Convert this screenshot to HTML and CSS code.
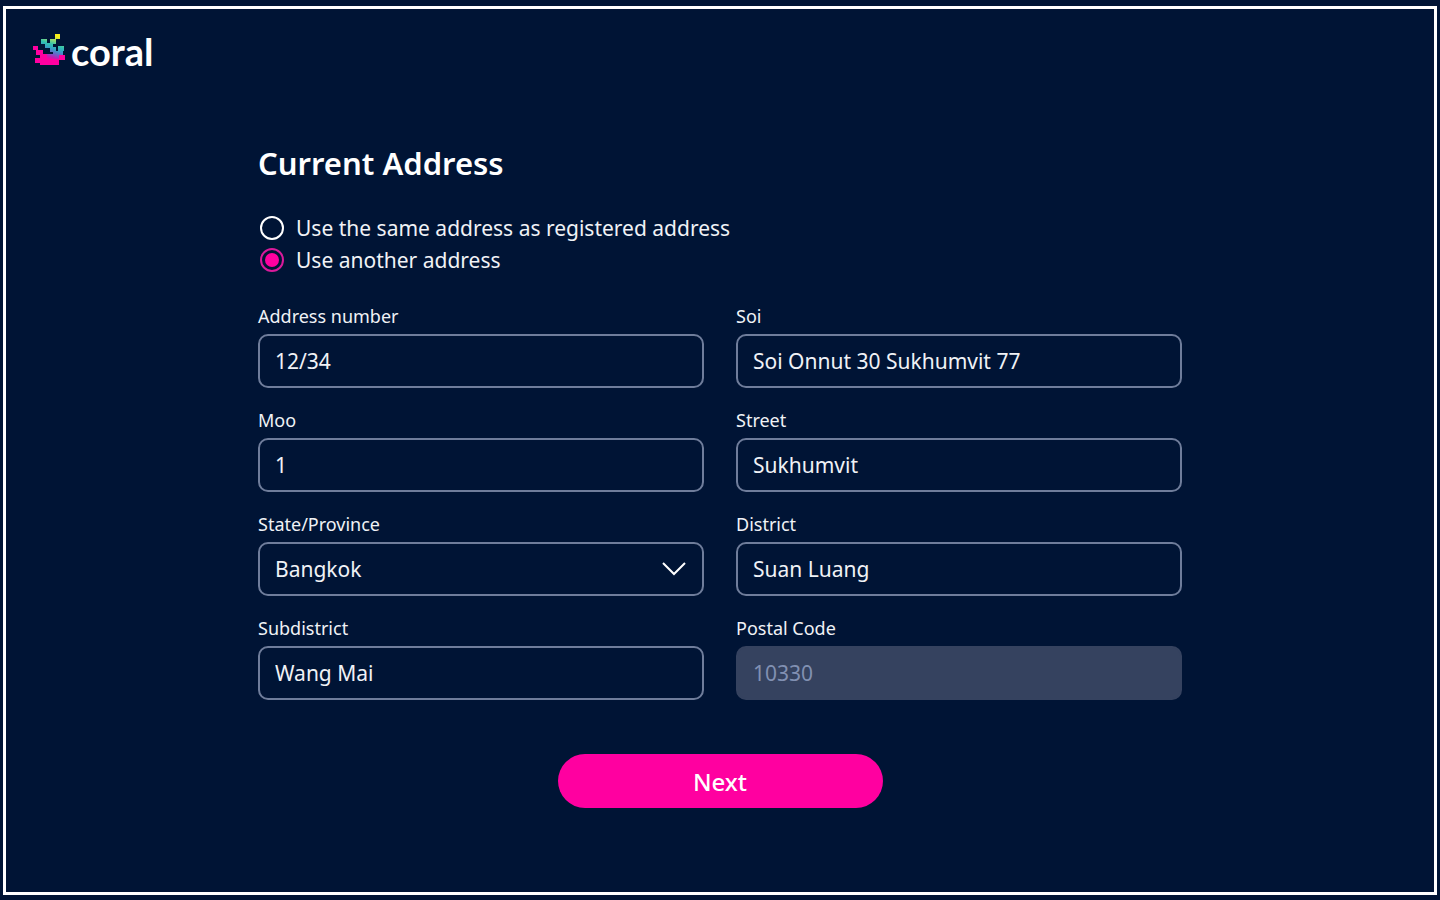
FILE: index.html
```html
<!DOCTYPE html>
<html lang="en">

<head>
    <meta charset="UTF-8">
    <meta name="viewport" content="width=device-width, initial-scale=1.0">
    <title>Coral - Current Address</title>
    <link rel="stylesheet" href="styles.css">
</head>

<body>
    <div class="page">
        <header class="header">
            <a class="logo" href="#">
                <svg class="logo-mark" viewBox="0 0 32 32" aria-hidden="true">
                    <defs>
                        <linearGradient id="coral" gradientUnits="userSpaceOnUse" x1="26" y1="1" x2="18" y2="26">
                            <stop offset="0.08" stop-color="#f8ee18" />
                            <stop offset="0.27" stop-color="#86d77c" />
                            <stop offset="0.42" stop-color="#31c2b0" />
                            <stop offset="0.58" stop-color="#36a0c8" />
                            <stop offset="0.74" stop-color="#6b62c8" />
                            <stop offset="0.88" stop-color="#c020b4" />
                            <stop offset="1" stop-color="#ff00a0" />
                        </linearGradient>
                    </defs>
                    <path fill="url(#coral)" d="M22 0h5v5h-4v5h-3v3h3v4h2v-5h6v5h-1v4h-4v4H13v-5h7v-2h-3v-4h-5v-4H8V5h6v4h3V5h5z" />
                    <path fill="#ff00a0" d="M0 12h5v4h5v4h4v5h12v6H7v-2H2v-5h5v-3H3v-5H0zM26 21h6v5h-6z" />
                </svg>
                <span>coral</span>
            </a>
        </header>

        <main class="content">
            <form class="address-form">
                <h1>Current Address</h1>

                <div class="options">
                    <label class="option">
                        <input type="radio" name="address-type" value="same">
                        Use the same address as registered address
                    </label>
                    <label class="option">
                        <input type="radio" name="address-type" value="another" checked>
                        Use another address
                    </label>
                </div>

                <div class="fields">
                    <div class="field">
                        <label for="number">Address number</label>
                        <input type="text" id="number" value="12/34">
                    </div>
                    <div class="field">
                        <label for="soi">Soi</label>
                        <input type="text" id="soi" value="Soi Onnut 30 Sukhumvit 77">
                    </div>
                    <div class="field">
                        <label for="moo">Moo</label>
                        <input type="text" id="moo" value="1">
                    </div>
                    <div class="field">
                        <label for="street">Street</label>
                        <input type="text" id="street" value="Sukhumvit">
                    </div>
                    <div class="field">
                        <label for="province">State/Province</label>
                        <div class="select">
                            <select id="province">
                                <option>Bangkok</option>
                            </select>
                            <svg class="chevron" viewBox="0 0 24 14" aria-hidden="true">
                                <path d="M1 1l11 11L23 1" />
                            </svg>
                        </div>
                    </div>
                    <div class="field">
                        <label for="district">District</label>
                        <input type="text" id="district" value="Suan Luang">
                    </div>
                    <div class="field">
                        <label for="subdistrict">Subdistrict</label>
                        <input type="text" id="subdistrict" value="Wang Mai">
                    </div>
                    <div class="field">
                        <label for="postal">Postal Code</label>
                        <input type="text" id="postal" value="10330" disabled>
                    </div>
                </div>

                <button class="next" type="submit">Next</button>
            </form>
        </main>
    </div>
</body>

</html>
```
FILE: styles.css
```css
* {
    margin: 0;
    padding: 0;
    box-sizing: border-box;
}

body {
    min-height: 100vh;
    display: flex;
    padding: 6px 3px 5px;
    background: #001435;
    color: #f0f2f6;
    font-family: 'Noto Sans', 'Open Sans', sans-serif;
}

.page {
    flex: 1;
    border: 3px solid #fff;
}

.header {
    padding: 20px 27px;
}

.logo {
    display: flex;
    align-items: center;
    gap: 6px;
    width: fit-content;
    color: #fff;
    font-family: Lato, sans-serif;
    font-size: 38px;
    font-weight: bold;
    line-height: 40px;
    text-decoration: none;
}

.logo span {
    padding-top: 2px;
}

.logo-mark {
    width: 32px;
    height: 32px;
}

.content {
    padding: 50px 32px;
}

.address-form {
    max-width: 924px;
    margin: 0 auto;
}

h1 {
    color: #fff;
    font-size: 31px;
    font-weight: 600;
    line-height: 44px;
}

.options {
    margin-top: 27px;
}

.option {
    display: flex;
    align-items: center;
    gap: 12px;
    padding-left: 2px;
    font-size: 21px;
    line-height: 32px;
}

.option input {
    appearance: none;
    width: 24px;
    height: 24px;
    border: 2px solid #fff;
    border-radius: 50%;
}

.option input:checked {
    padding: 3px;
    border-color: #d91a9b;
    background: #ff00a0 content-box;
}

.fields {
    display: grid;
    grid-template-columns: 1fr 1fr;
    gap: 18px 32px;
    margin-top: 26px;
}

.field > label {
    display: block;
    margin-bottom: 4px;
    font-size: 18px;
    line-height: 28px;
}

.field input,
.field select {
    display: block;
    width: 100%;
    height: 54px;
    padding: 0 15px;
    border: 2px solid #6f7d9b;
    border-radius: 10px;
    background: transparent;
    color: #f0f2f6;
    font-family: inherit;
    font-size: 21px;
}

.field select {
    appearance: none;
}

.field input:disabled {
    border-color: #35425f;
    background: #35425f;
    color: #8190b2;
}

.select {
    position: relative;
}

.chevron {
    position: absolute;
    top: 20px;
    right: 18px;
    width: 24px;
    height: 14px;
    fill: none;
    stroke: #fff;
    stroke-width: 2;
    pointer-events: none;
}

.next {
    display: block;
    width: 325px;
    height: 54px;
    margin: 54px auto 0;
    border: 0;
    border-radius: 27px;
    background: #ff00a0;
    color: #fff;
    font-family: inherit;
    font-size: 24px;
    font-weight: 500;
}
```
